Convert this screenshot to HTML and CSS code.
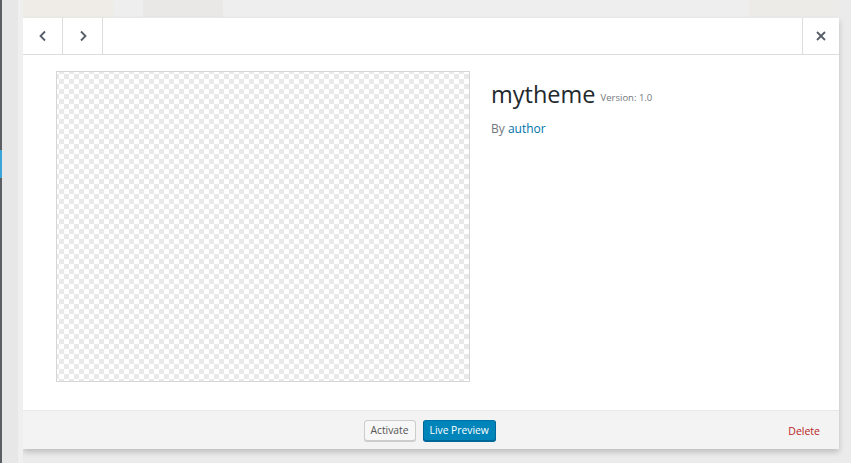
FILE: index.html
```html
<!DOCTYPE html>
<html>
<head>
<meta charset="utf-8">
<link rel="stylesheet" href="styles.css">
</head>
<body>
<div class="backdrop">
  <div class="edge"><span class="edge-blue"></span></div>
  <div class="stage">
    <div class="topstrip">
      <span class="ghost g1"></span>
      <span class="ghost g2"></span>
      <span class="ghost g3"></span>
    </div>
    <div class="modal">
      <div class="header">
        <button class="navbtn">
          <svg width="12" height="12" viewBox="0 0 12 12"><path d="M8 1.5 L3.5 6 L8 10.5" fill="none" stroke="#555d66" stroke-width="1.8"/></svg>
        </button>
        <button class="navbtn">
          <svg width="12" height="12" viewBox="0 0 12 12"><path d="M4 1.5 L8.5 6 L4 10.5" fill="none" stroke="#555d66" stroke-width="1.8"/></svg>
        </button>
        <div class="spacer"></div>
        <button class="closebtn">
          <svg width="12" height="12" viewBox="0 0 12 12"><path d="M2 2 L10 10 M10 2 L2 10" fill="none" stroke="#555d66" stroke-width="1.8"/></svg>
        </button>
      </div>
      <div class="body">
        <div class="shot"></div>
        <div class="info">
          <h2 class="name">mytheme <span class="version">Version: 1.0</span></h2>
          <p class="author">By <a href="#">author</a></p>
        </div>
      </div>
      <div class="footer">
        <div class="actions">
          <button class="btn">Activate</button>
          <button class="btn primary">Live Preview</button>
        </div>
        <a class="delete" href="#">Delete</a>
      </div>
    </div>
  </div>
</div>
</body>
</html>
```
FILE: styles.css
```css
* { box-sizing: border-box; }
html, body { margin: 0; padding: 0; }
body {
  width: 851px;
  height: 463px;
  overflow: hidden;
  background: #ececec;
  font-family: "Open Sans", "DejaVu Sans", sans-serif;
}
.backdrop {
  display: flex;
  height: 463px;
}
.edge {
  width: 23px;
  flex: none;
  border-left: 2px solid #5b5f63;
  background: linear-gradient(to right, #e7e7e7 0 16px, #efefef 16px);
  position: relative;
}
.edge-blue {
  position: absolute;
  left: -2px;
  top: 150px;
  width: 2px;
  height: 28px;
  background: #3aa5d8;
}
.stage {
  flex: 1;
  display: flex;
  flex-direction: column;
  padding-right: 12px;
  background: #ebebeb;
}
.topstrip {
  height: 18px;
  flex: none;
  display: flex;
  background: #eeeeee;
}
.ghost { display: block; height: 17px; }
.g1 { width: 90px; background: #efece8; }
.g2 { width: 80px; margin-left: 30px; background: #e9e8e7; }
.g3 { width: 90px; margin-left: auto; background: #ecebe8; }
.modal {
  width: 816px;
  height: 431px;
  background: #fff;
  display: flex;
  flex-direction: column;
  box-shadow: 0 3px 6px rgba(0,0,0,0.2);
}
.header {
  height: 37px;
  flex: none;
  display: flex;
  border-bottom: 1px solid #dddddd;
}
.header button {
  border: 0;
  background: #fff;
  padding: 0;
  display: flex;
  align-items: center;
  justify-content: center;
}
.navbtn {
  width: 40px;
  border-right: 1px solid #dddddd !important;
}
.spacer { flex: 1; }
.closebtn {
  width: 37px;
  border-left: 1px solid #dddddd !important;
}
.body {
  flex: 1;
  display: flex;
  padding: 16px 0 0 33px;
  gap: 21px;
}
.shot {
  width: 414px;
  height: 311px;
  flex: none;
  border: 1px solid #d6d6d6;
  background-color: #fff;
  background-image: conic-gradient(#e9e9e9 25%, #fff 0 50%, #e9e9e9 0 75%, #fff 0);
  background-size: 10px 10px;
  background-position: 2px 2px;
}
.info { padding-top: 8px; }
.name {
  margin: 0;
  font-weight: 400;
  font-size: 23.5px;
  line-height: 30px;
  color: #23282d;
}
.version {
  font-size: 9.5px;
  color: #72777c;
  margin-left: -1px;
  vertical-align: 2px;
}
.author {
  margin: 7px 0 0;
  font-size: 12px;
  color: #72777c;
}
.author a { color: #0073aa; text-decoration: none; }
.footer {
  height: 39px;
  flex: none;
  background: #f3f3f3;
  border-top: 1px solid #e8e8e8;
  display: flex;
  align-items: center;
  padding-right: 19px;
}
.actions {
  flex: 1;
  display: flex;
  justify-content: center;
  gap: 7px;
  margin-right: -48px;
}
.btn {
  height: 21px;
  padding: 0 6px;
  font-family: inherit;
  font-size: 10.3px;
  color: #555;
  background: #f7f7f7;
  border: 1px solid #cccccc;
  border-radius: 3px;
  box-shadow: 0 1px 0 #cccccc;
}
.btn.primary {
  background: #0085ba;
  border-color: #0073aa #006799 #006799;
  color: #fff;
  box-shadow: 0 1px 0 #006799;
}
.delete {
  font-size: 10.5px;
  color: #b82525;
  text-decoration: none;
  margin-top: 1px;
}
```
